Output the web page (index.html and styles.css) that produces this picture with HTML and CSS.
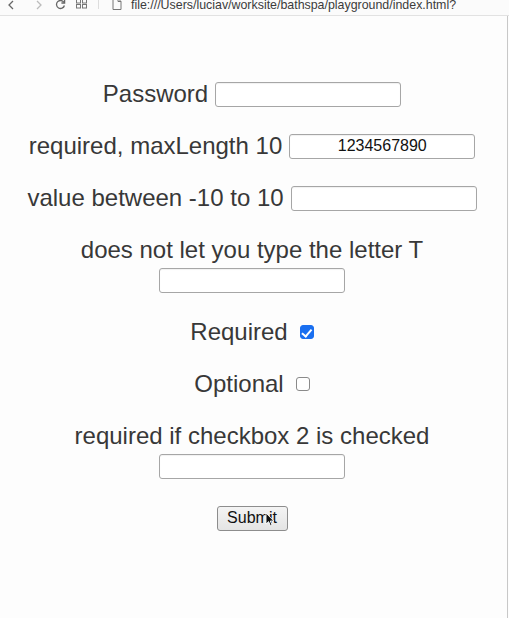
FILE: index.html
```html
<!DOCTYPE html>
<html lang="en">
<head>
<meta charset="utf-8">
<title>Form validation playground</title>
<link rel="stylesheet" href="styles.css">
</head>
<body>
<div class="window">
  <div class="toolbar">
    <svg class="tb-icon back" width="8" height="10" viewBox="0 0 8 10"><path d="M6 1 L2 5 L6 9" fill="none" stroke="#666" stroke-width="1.3"/></svg>
    <svg class="tb-icon fwd" width="8" height="10" viewBox="0 0 8 10"><path d="M2 1 L6 5 L2 9" fill="none" stroke="#bbb" stroke-width="1.3"/></svg>
    <svg class="tb-icon reload" width="11" height="11" viewBox="0 0 11 11"><path d="M9 3.5 A4 4 0 1 0 9.4 6.5" fill="none" stroke="#666" stroke-width="1.3"/><path d="M9.6 0.8 L9.6 4 L6.4 4" fill="none" stroke="#666" stroke-width="1.3"/></svg>
    <svg class="tb-icon grid" width="11" height="10" viewBox="0 0 11 10"><rect x="0.5" y="0.5" width="4" height="3.5" fill="none" stroke="#777"/><rect x="6.5" y="0.5" width="4" height="3.5" fill="none" stroke="#777"/><rect x="0.5" y="5.5" width="4" height="3.5" fill="none" stroke="#777"/><rect x="6.5" y="5.5" width="4" height="3.5" fill="none" stroke="#777"/></svg>
    <span class="tb-sep"></span>
    <svg class="tb-icon page-ic" width="10" height="12" viewBox="0 0 10 12"><path d="M1 0.5 H6 L9 3.5 V11.5 H1 Z" fill="none" stroke="#777"/><path d="M6 0.5 V3.5 H9" fill="none" stroke="#777"/></svg>
    <span class="url">file:///Users/luciav/worksite/bathspa/playground/index.html?</span>
  </div>
  <div class="page">
    <form class="form">
      <div class="row">
        <label class="lbl" for="pw">Password</label>
        <input class="field" id="pw" type="password">
      </div>
      <div class="row">
        <label class="lbl" for="ml">required, maxLength 10</label>
        <input class="field centered" id="ml" type="text" value="1234567890">
      </div>
      <div class="row">
        <label class="lbl" for="num">value between -10 to 10</label>
        <input class="field" id="num" type="text">
      </div>
      <div class="row">
        <label class="lbl" for="not">does not let you type the letter T</label>
        <input class="field" id="not" type="text">
      </div>
      <div class="row check-row">
        <label class="lbl" for="c1">Required</label>
        <input class="box" id="c1" type="checkbox" checked>
      </div>
      <div class="row check-row">
        <label class="lbl" for="c2">Optional</label>
        <input class="box" id="c2" type="checkbox">
      </div>
      <div class="row">
        <label class="lbl" for="dep">required if checkbox 2 is checked</label>
        <input class="field" id="dep" type="text">
      </div>
      <div class="row">
        <button class="submit" type="button">Submit</button>
      </div>
    </form>
    <svg class="cursor" width="10" height="15" viewBox="0 0 10 15"><path d="M1 1 L1 12 L3.6 9.6 L5.4 13.8 L7 13 L5.3 9 L8.8 9 Z" fill="#111" stroke="#fff" stroke-width="0.9"/></svg>
  </div>
</div>
</body>
</html>
```

FILE: styles.css
```css
html, body {
  margin: 0;
  padding: 0;
  background: #fdfdfd;
}

.window {
  width: 509px;
  height: 618px;
  display: flex;
  flex-direction: column;
  overflow: hidden;
  font-family: "Liberation Sans", Arial, sans-serif;
}

.toolbar {
  height: 15px;
  flex: none;
  position: relative;
  background: #fbfbfb;
  border-bottom: 1px solid #e2e2e2;
  display: flex;
  align-items: flex-start;
  overflow: hidden;
}

.tb-icon {
  flex: none;
  margin-top: 0;
}

.back { margin-left: 7px; }
.fwd { margin-left: 20px; }
.reload { margin-left: 12px; margin-top: -1px; }
.grid { margin-left: 10px; margin-top: -1px; }

.tb-sep {
  width: 1px;
  height: 10px;
  background: #ddd;
  margin-left: 11px;
  margin-top: -1px;
}

.page-ic { margin-left: 13px; margin-top: -2px; }

.url {
  margin-left: 9px;
  margin-top: -2px;
  font-size: 12.4px;
  line-height: 14px;
  color: #3c3c3c;
  white-space: nowrap;
}

.page {
  flex: 1;
  position: relative;
  width: 507px;
  border-right: 1px solid #c8c8c8;
  background: #fdfdfd;
}

.form {
  display: flex;
  flex-direction: column;
  gap: 22px;
  padding: 63px 3px 0 0;
  margin: 0;
}

.row {
  display: flex;
  flex-wrap: wrap;
  justify-content: center;
  align-items: center;
  column-gap: 7px;
}

.lbl {
  font-size: 24px;
  line-height: 30px;
  color: #383838;
  white-space: nowrap;
}

.field {
  box-sizing: border-box;
  width: 186px;
  height: 25px;
  margin: 2.5px 0;
  padding: 0 6px;
  background: #fff;
  border: 1px solid #a6a6a6;
  border-radius: 3px;
  box-shadow: inset 0 1px 1px rgba(0, 0, 0, 0.06);
  font-family: "Liberation Sans", Arial, sans-serif;
  font-size: 16px;
  color: #111;
  outline: none;
}

.centered {
  text-align: center;
}

.check-row {
  column-gap: 12px;
}

.box {
  appearance: none;
  -webkit-appearance: none;
  box-sizing: border-box;
  width: 14px;
  height: 14px;
  margin: 0;
  border: 1px solid #8a8a8a;
  border-radius: 3px;
  background: #fff;
  position: relative;
}

.box:checked {
  background: #1a6ff0;
  border-color: #1a6ff0;
}

.box:checked::after {
  content: "";
  position: absolute;
  left: 3.5px;
  top: 0.5px;
  width: 3.5px;
  height: 7.5px;
  border: solid #fff;
  border-width: 0 2px 2px 0;
  transform: rotate(40deg);
}

.submit {
  box-sizing: border-box;
  width: 71px;
  height: 25px;
  margin: 2.5px 0;
  padding: 0;
  background: linear-gradient(#f4f4f4, #e4e4e4);
  border: 1px solid #8d8d8d;
  border-radius: 3px;
  font-family: "Liberation Sans", Arial, sans-serif;
  font-size: 16px;
  color: #111;
}

.cursor {
  position: absolute;
  left: 265px;
  top: 496px;
}
```
